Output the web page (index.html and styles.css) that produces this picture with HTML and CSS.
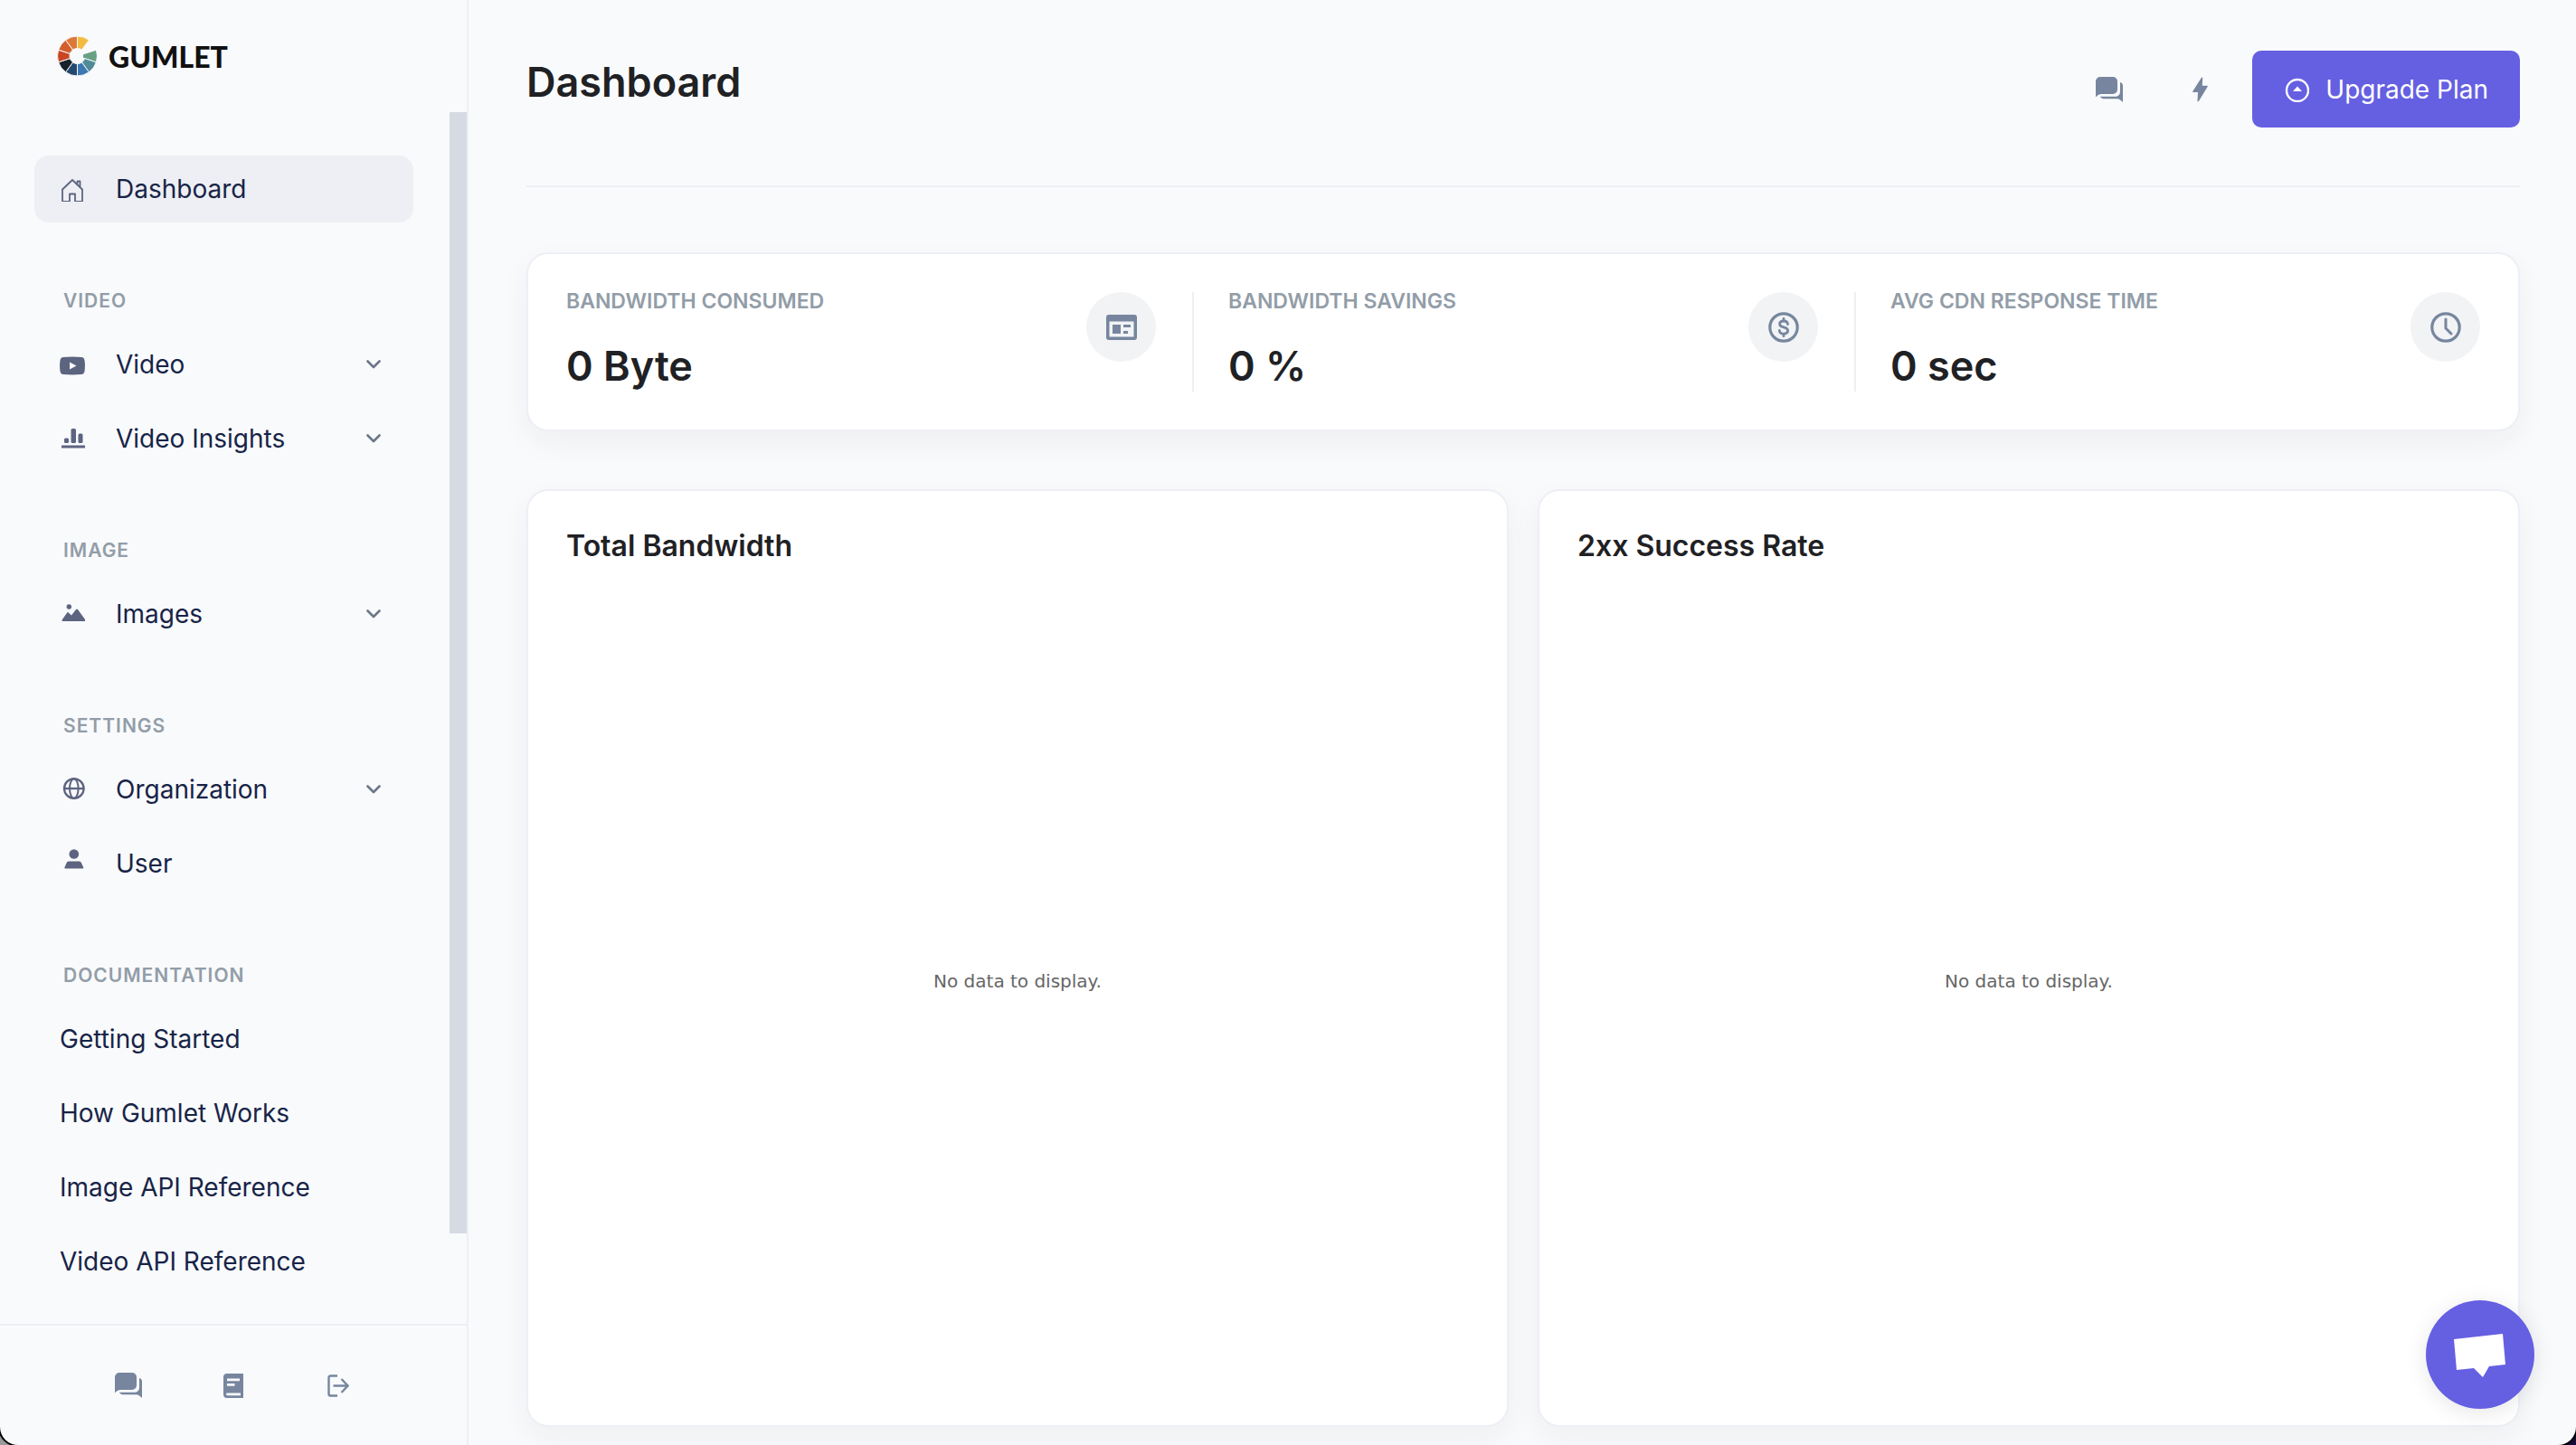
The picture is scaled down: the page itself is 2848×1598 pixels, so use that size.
FILE: index.html
```html
<!DOCTYPE html>
<html lang="en">
<head>
<meta charset="utf-8">
<meta name="viewport" content="width=device-width, initial-scale=1">
<title>Dashboard - Gumlet</title>
<link rel="stylesheet" href="styles.css">
</head>
<body>
<svg class="sprite" aria-hidden="true">
  <symbol id="i-chat" viewBox="0 0 30 28">
    <path d="M0 22.500V5a5 5 0 0 1 5-5h14a5 5 0 0 1 5 5v9a5 5 0 0 1-5 5H6.500C3.500 19 2 20.500 0 22.500z"/>
    <path d="M27 6c2 .6 3 1.800 3 4v18l-3.500-3c-.8-.6-1.800-.8-2.800-.8H9c-2 0-3.200-1-4.200-2.400H21c4 0 6-2 6-6z"/>
  </symbol>
  <symbol id="i-chevron" viewBox="0 0 16 10"><path d="M1.500 1.500 8 8l6.500-6.500" fill="none" stroke="currentColor" stroke-width="2.600" stroke-linecap="round" stroke-linejoin="round"/></symbol>
</svg>
<div class="app">
  <aside class="sidebar">
    <a class="logo" href="#">
      <svg width="45" height="46" viewBox="0 0 44 46" stroke="#f9fafc" stroke-width="1" aria-hidden="true">
        <path fill="#f3bb40" d="M22 1A22 22 0 0 1 34.900 5.200L27 16.100A8.500 8.500 0 0 0 22 14.500z"/>
        <path fill="#68a084" d="M42.900 16.200A22 22 0 0 1 42.900 29.800L28 25V21z"/>
        <path fill="#508c98" d="M42.900 29.800A22 22 0 0 1 34.900 40.800L27 29.900A8.500 8.500 0 0 0 30.100 25.600z"/>
        <path fill="#3d78b3" d="M34.900 40.800A22 22 0 0 1 22 45V31.500A8.500 8.500 0 0 0 27 29.900z"/>
        <path fill="#25496e" d="M22 45A22 22 0 0 1 9.100 40.800L17 29.900A8.500 8.500 0 0 0 22 31.500z"/>
        <path fill="#16212b" d="M9.100 40.800A22 22 0 0 1 1.100 29.800L13.900 25.600A8.500 8.500 0 0 0 17 29.900z"/>
        <path fill="#c84622" d="M1.100 29.800A22 22 0 0 1 1.100 16.200L13.900 20.400A8.500 8.500 0 0 0 13.900 25.600z"/>
        <path fill="#d2602c" d="M1.100 16.200A22 22 0 0 1 9.100 5.200L17 16.100A8.500 8.500 0 0 0 13.900 20.400z"/>
        <path fill="#dd7838" d="M9.100 5.200A22 22 0 0 1 22 1V14.500A8.500 8.500 0 0 0 17 16.100z"/>
      </svg>
      <span>GUMLET</span>
    </a>

    <div class="menu">
      <nav class="nav">
        <ul>
          <li><a class="item active" href="#">
            <svg width="28" height="28" viewBox="0 0 28 28" fill="none" stroke="currentColor" stroke-width="1.800" stroke-linejoin="round"><path d="M3 29V15.500L14 5l11 10.500V29h-8v-8.500h-6V29zM19.500 10V6.500h3v6" transform="translate(0 -1)"/></svg>
            <span>Dashboard</span></a></li>
        </ul>
        <h2>Video</h2>
        <ul>
          <li><a class="item" href="#">
            <svg width="28" height="28" viewBox="0 0 28 28" fill="currentColor"><path fill-rule="evenodd" d="M4 6q10-1 20 0 3 .3 3.500 3.500.9 6 0 12Q27 24.700 24 25q-10 .9-20 0-3-.3-3.500-3.500-.9-6 0-12Q1 6.300 4 6zM11 11.500v8l7.500-4z"/></svg>
            <span>Video</span><svg class="chevron" width="16" height="10"><use href="#i-chevron"/></svg></a></li>
          <li><a class="item" href="#">
            <svg width="28" height="28" viewBox="0 0 28 28" fill="currentColor"><path d="M2 21.500h26v3H2z"/><rect x="5" y="13.500" width="5" height="5.500" rx="1.500"/><rect x="12.500" y="3" width="5.500" height="16" rx="1.500"/><rect x="20.500" y="8.500" width="5" height="10.500" rx="1.500"/></svg>
            <span>Video Insights</span><svg class="chevron" width="16" height="10"><use href="#i-chevron"/></svg></a></li>
        </ul>
        <h2>Image</h2>
        <ul>
          <li><a class="item" href="#">
            <svg width="28" height="28" viewBox="0 0 28 28" fill="currentColor"><circle cx="10.300" cy="6" r="2.700"/><path d="M3.300 22Q2 22 2.600 20.500L8.800 11.800 13 15.500 18 9q1-1.200 2 0l8 11q.8 2-.5 2z"/></svg>
            <span>Images</span><svg class="chevron" width="16" height="10"><use href="#i-chevron"/></svg></a></li>
        </ul>
        <h2>Settings</h2>
        <ul>
          <li><a class="item" href="#">
            <svg width="28" height="28" viewBox="0 0 28 28" fill="none" stroke="currentColor" stroke-width="2.300"><circle cx="15.800" cy="13" r="10.800"/><ellipse cx="15.800" cy="13" rx="4.800" ry="10.800" stroke-width="2"/><path d="M5 13h21.600"/></svg>
            <span>Organization</span><svg class="chevron" width="16" height="10"><use href="#i-chevron"/></svg></a></li>
          <li><a class="item" href="#">
            <svg width="28" height="32" viewBox="0 0 28 32" fill="currentColor"><circle cx="15.800" cy="5.500" r="5.300"/><path d="M6 21.500q-1-.2-.5-1.500l2-4.500q.7-2 2.500-2h11.600q1.800 0 2.500 2l2 4.500q.5 1.300-.5 1.500z"/></svg>
            <span>User</span></a></li>
        </ul>
        <h2>Documentation</h2>
        <ul>
          <li><a class="item" href="#">Getting Started</a></li>
          <li><a class="item" href="#">How Gumlet Works</a></li>
          <li><a class="item" href="#">Image API Reference</a></li>
          <li><a class="item" href="#">Video API Reference</a></li>
        </ul>
      </nav>
      <div class="scrollbar"><div class="thumb"></div></div>
    </div>

    <div class="sidebar-foot">
      <button type="button" aria-label="Chat"><svg width="30" height="28" fill="currentColor"><use href="#i-chat"/></svg></button>
      <button type="button" aria-label="Documentation"><svg width="22" height="27" viewBox="0 0 22 27" fill="currentColor"><path fill-rule="evenodd" d="M4 0h18v27H4q-4 0-4-4V4q0-4 4-4zM4 5.500v2.800h14V5.500zM4 11v2.800h8.500V11zM4.500 21.500Q3 21.500 3 22.800T4.500 24.200H19v-2.700z"/></svg></button>
      <button type="button" aria-label="Log out"><svg width="24" height="25" viewBox="0 0 24 25" fill="none" stroke="currentColor" stroke-width="2.400"><path d="M11 1.500H3.500q-2 0-2 2v18q0 2 2 2H11M6.500 12.500H22M15.500 5l7 7.500-7 7.500"/></svg></button>
    </div>
  </aside>

  <main class="main">
    <header class="page-head">
      <h1>Dashboard</h1>
      <div class="actions">
        <button class="icon-btn" type="button" aria-label="Chat"><svg width="30" height="28" fill="currentColor"><use href="#i-chat"/></svg></button>
        <button class="icon-btn" type="button" aria-label="Activity"><svg width="17" height="28" viewBox="0 0 17 28" fill="currentColor"><path d="M10 .8Q11 0 11.200 1L10.800 9.800H16q1.200.2.600 1.200L7 26.800Q5.600 28.200 5.500 26.500L6 17H1Q-.2 17 .4 15.700z"/></svg></button>
        <button class="upgrade" type="button">
          <svg width="28" height="28" viewBox="0 0 28 28"><circle cx="15" cy="15" r="12" fill="none" stroke="currentColor" stroke-width="2.400"/><path d="M15 10.500l5 5.500H10z" fill="currentColor"/></svg>
          Upgrade Plan</button>
      </div>
    </header>

    <section class="card stats">
      <div class="stat">
        <div><h3>Bandwidth Consumed</h3><p>0 Byte</p></div>
        <span class="badge"><svg width="34" height="28" viewBox="0 0 34 28" fill="currentColor"><path fill-rule="evenodd" d="M3 0h28q3 0 3 3v22q0 3-3 3H3q-3 0-3-3V3q0-3 3-3zM3.500 7.500v17h27v-17z"/><path d="M7 11h9v10H7zM19 11h8v3h-8zM19 18h5v3h-5z"/></svg></span>
      </div>
      <span class="rule"></span>
      <div class="stat">
        <div><h3>Bandwidth Savings</h3><p>0 %</p></div>
        <span class="badge"><svg width="34" height="34" viewBox="0 0 34 34" fill="none" stroke="currentColor" stroke-width="3.200"><circle cx="17" cy="17" r="15.200"/><path stroke-width="2.800" stroke-linecap="round" d="M21.500 13.500q-.3-3.500-4.500-3.500t-4.400 3.300q0 2.700 4.400 3.600t4.600 3.800q-.2 3.500-4.600 3.500t-4.700-3.700M17 7.500V10M17 24.200v2.500"/></svg></span>
      </div>
      <span class="rule"></span>
      <div class="stat">
        <div><h3>Avg CDN Response Time</h3><p>0 sec</p></div>
        <span class="badge"><svg width="34" height="34" viewBox="0 0 34 34" fill="none" stroke="currentColor" stroke-width="3.200"><circle cx="17" cy="17" r="15.200"/><path stroke-width="3" stroke-linecap="round" d="M17 8v10l6 6"/></svg></span>
      </div>
    </section>

    <div class="charts">
      <section class="card chart">
        <h2>Total Bandwidth</h2>
        <div class="plot">No data to display.</div>
      </section>
      <section class="card chart">
        <h2>2xx Success Rate</h2>
        <div class="plot">No data to display.</div>
      </section>
    </div>
  </main>
</div>

<button class="messenger" type="button" aria-label="Open chat">
  <svg width="58" height="50" viewBox="0 0 58 50" fill="#fff"><path d="M0 8 54 2l3 34-18 2-7 12-10-10-19 2z"/></svg>
</button>
</body>
</html>
```
FILE: styles.css
```css
* { box-sizing: border-box; }

html {
  height: 100%;
  background: linear-gradient(90deg, #999 50%, #170a38 50%);
}

body {
  margin: 0;
  height: 100%;
  overflow: hidden;
  font-family: Inter, "Liberation Sans", sans-serif;
  color: #1f2124;
}

h1, h2, h3, p, ul { margin: 0; padding: 0; }
ul { list-style: none; }
a { color: inherit; text-decoration: none; }
svg { display: block; flex: none; }
button { border: 0; padding: 0; background: none; font: inherit; color: inherit; cursor: pointer; }

.sprite { display: none; }

.app {
  display: flex;
  height: 100%;
  overflow: hidden;
  background: #f9fafc;
  border-radius: 0 0 20px 20px;
  box-shadow: 0 0 0 2px #000;
}

/* Sidebar */
.sidebar {
  display: flex;
  flex-direction: column;
  flex: none;
  width: 518px;
  border-right: 2px solid #eeeff4;
}

.logo {
  display: flex;
  align-items: center;
  gap: 12px;
  height: 124px;
  padding-left: 63px;
  font-family: Lato, sans-serif;
  font-size: 32px;
  font-weight: 900;
  color: #111;
}

.menu {
  display: flex;
  flex: 1;
  min-height: 0;
}

.nav {
  flex: 1;
  padding: 48px 40px 0 38px;
  overflow: hidden;
}

.nav ul {
  display: flex;
  flex-direction: column;
  gap: 8px;
}

.nav h2 {
  margin: 74px 0 20px 32px;
  font-size: 21px;
  line-height: 26px;
  font-weight: 600;
  letter-spacing: 1px;
  text-transform: uppercase;
  color: #929da8;
}

.item {
  display: flex;
  align-items: center;
  gap: 34px;
  height: 74px;
  padding: 0 36px 0 28px;
  border-radius: 16px;
  font-size: 28px;
  color: #172447;
}

.item.active { background: #eeeff4; }
.item svg { color: #5d6480; }
.item .chevron { margin-left: auto; color: #6c7789; }

.scrollbar { width: 19px; }
.thumb { height: 92.5%; background: #d5dae3; }

.sidebar-foot {
  display: flex;
  align-items: center;
  justify-content: center;
  height: 134px;
  border-top: 2px solid #eeeff4;
  color: #77869e;
}

.sidebar-foot button {
  display: flex;
  justify-content: center;
  width: 116px;
}

/* Main column */
.main {
  flex: 1;
  min-width: 0;
  padding: 56px 62px 0 64px;
}

.page-head {
  display: flex;
  justify-content: space-between;
  align-items: flex-start;
  padding-bottom: 64px;
  border-bottom: 2px solid #eeeff4;
}

h1 {
  font-size: 45px;
  line-height: 70px;
  font-weight: 600;
}

.actions {
  display: flex;
  align-items: center;
  color: #77869e;
}

.icon-btn {
  display: flex;
  align-items: center;
  justify-content: center;
  width: 100px;
  height: 85px;
}

.upgrade {
  display: flex;
  align-items: center;
  gap: 18px;
  height: 85px;
  margin-left: 8px;
  padding: 0 35px;
  border-radius: 10px;
  background: #655fe2;
  color: #fff;
  font-size: 28px;
}

.card {
  background: #fff;
  border: 2px solid #eeeff6;
  border-radius: 24px;
  padding: 42px;
  box-shadow: 0 12px 32px rgba(30, 30, 40, .05);
}

.stats {
  display: grid;
  grid-template-columns: 1fr auto 1fr auto 1fr;
  margin-top: 72px;
}

.rule {
  width: 2px;
  margin: 0 38px 0 40px;
  background: #eeeff2;
}

.stat {
  display: flex;
  justify-content: space-between;
  height: 110px;
}

.stat h3 {
  font-size: 23px;
  line-height: 20px;
  font-weight: 600;
  text-transform: uppercase;
  color: #929da8;
}

.stat p {
  margin-top: 33px;
  font-size: 45px;
  line-height: 58px;
  font-weight: 600;
}

.badge {
  display: flex;
  align-items: center;
  justify-content: center;
  width: 77px;
  height: 77px;
  border-radius: 50%;
  background: #f1f3f5;
  color: #77869e;
}

.charts {
  display: grid;
  grid-template-columns: 1fr 1fr;
  gap: 32px;
  margin-top: 64px;
}

.chart h2 {
  font-size: 32px;
  line-height: 38px;
  font-weight: 600;
}

.plot {
  display: flex;
  align-items: center;
  justify-content: center;
  height: 899px;
  margin-top: 12px;
  font-family: "DejaVu Sans", sans-serif;
  font-size: 20px;
  color: #666;
}

/* Floating chat launcher */
.messenger {
  position: fixed;
  right: 46px;
  bottom: 40px;
  display: flex;
  align-items: center;
  justify-content: center;
  width: 120px;
  height: 120px;
  border-radius: 50%;
  background: #655fe2;
  box-shadow: 0 4px 24px rgba(0, 0, 0, .1);
}
```
